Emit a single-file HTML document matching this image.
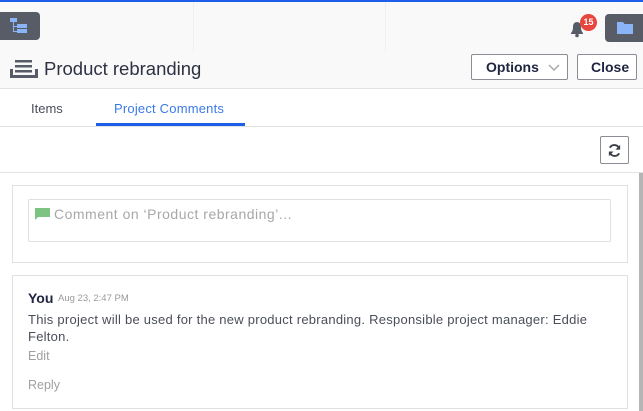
<!DOCTYPE html>
<html><head><style>
*{margin:0;padding:0;box-sizing:border-box}
body{width:643px;height:411px;overflow:hidden;background:#fff;font-family:"Liberation Sans",sans-serif;position:relative;color:#2d3142}
.abs{position:absolute;white-space:nowrap}
</style></head><body>
<div class="abs" style="left:0;top:0;width:643px;height:2px;background:#1f5ee8"></div>
<div class="abs" style="left:0;top:2px;width:643px;height:86px;background:#f9f9f9"></div>
<div class="abs" style="left:193px;top:2px;width:1px;height:50px;background:#f0f0f0"></div>
<div class="abs" style="left:385px;top:2px;width:1px;height:50px;background:#f0f0f0"></div>
<div class="abs" style="left:0;top:12px;width:40px;height:28px;background:#575c66;border-radius:0 4px 4px 0"></div>
<svg class="abs" style="left:8px;top:16px" width="22" height="20" viewBox="0 0 22 20"><rect x="2" y="2" width="7" height="4" fill="#8ab4f8"/><rect x="5" y="6" width="1" height="10" fill="#8ab4f8"/><rect x="5" y="10" width="4" height="1" fill="#8ab4f8"/><rect x="5" y="15" width="4" height="1" fill="#8ab4f8"/><rect x="9" y="8" width="10" height="4" fill="#8ab4f8"/><rect x="9" y="13" width="10" height="4" fill="#8ab4f8"/></svg>
<svg class="abs" style="left:567px;top:18px" width="20" height="20" viewBox="0 0 20 20"><path d="M4 16 L4 15 Q6 13 6 9 Q6 4 10 4 Q14 4 14 9 Q14 13 16 15 L16 16 Z" fill="#575c66"/><circle cx="10" cy="17.5" r="1.8" fill="#575c66"/></svg>
<div class="abs" style="left:580px;top:14px;width:17px;height:17px;border-radius:50%;background:#e8453c;color:#fff;font-size:9px;font-weight:bold;text-align:center;line-height:17px">15</div>
<div class="abs" style="left:605px;top:14px;width:38px;height:28px;background:#575c66;border-radius:4px 0 0 4px"></div>
<svg class="abs" style="left:616px;top:21px" width="18" height="14" viewBox="0 0 18 14"><path d="M1 1 H7 L8.5 3 H17 V13 H1 Z" fill="#8ab4f8"/></svg>
<svg class="abs" style="left:10px;top:59px" width="28" height="20" viewBox="0 0 28 20"><rect x="5" y="1" width="17" height="2.5" fill="#575c66"/><rect x="5" y="6" width="17" height="2.5" fill="#575c66"/><rect x="5" y="11" width="17" height="2.5" fill="#575c66"/><path d="M0 10 H3 V16 H25 V10 H28 V19 H0 Z" fill="#575c66"/></svg>
<div class="abs" style="left:44px;top:58px;font-size:18.5px;color:#2d3142">Product rebranding</div>
<div class="abs" style="left:471px;top:54px;width:97px;height:26px;border:1px solid #8a8d94;border-radius:2px;background:#fff"></div>
<div class="abs" style="left:486px;top:59px;font-size:14px;font-weight:bold;color:#1f2440">Options</div>
<svg class="abs" style="left:548px;top:64px" width="12" height="8" viewBox="0 0 12 8"><path d="M1 1 L6 6 L11 1" stroke="#aaa" stroke-width="1.5" fill="none"/></svg>
<div class="abs" style="left:577px;top:54px;width:60px;height:26px;border:1px solid #8a8d94;border-radius:2px;background:#fff"></div>
<div class="abs" style="left:591px;top:59px;font-size:14px;font-weight:bold;color:#1f2440">Close</div>
<div class="abs" style="left:0;top:88px;width:643px;height:1px;background:#e2e2e2"></div>
<div class="abs" style="left:31px;top:101px;font-size:13px;color:#4a4e5a">Items</div>
<div class="abs" style="left:114px;top:101px;font-size:13px;color:#3a7ae8;letter-spacing:0.2px">Project Comments</div>
<div class="abs" style="left:96px;top:123px;width:149px;height:3px;background:#1f5ee8"></div>
<div class="abs" style="left:0;top:126px;width:643px;height:1px;background:#e2e2e2"></div>
<div class="abs" style="left:600px;top:136px;width:29px;height:28px;border:1px solid #8a8d94;border-radius:2px;background:#fff"></div>
<svg class="abs" style="left:607px;top:143px" width="15" height="15" viewBox="0 0 16 16"><path d="M13 6 A5.5 5.5 0 0 0 3 5" stroke="#3a3d45" stroke-width="2" fill="none"/><path d="M14 2 V7 H9 Z" fill="#3a3d45"/><path d="M3 10 A5.5 5.5 0 0 0 13 11" stroke="#3a3d45" stroke-width="2" fill="none"/><path d="M2 14 V9 H7 Z" fill="#3a3d45"/></svg>
<div class="abs" style="left:0;top:172px;width:643px;height:1px;background:#e2e2e2"></div>
<div class="abs" style="left:639px;top:173px;width:4px;height:238px;background:#b5b5b5"></div>
<div class="abs" style="left:12px;top:185px;width:616px;height:78px;border:1px solid #e0e0e0"></div>
<div class="abs" style="left:28px;top:199px;width:583px;height:43px;border:1px solid #e0e0e0;border-radius:2px"></div>
<svg class="abs" style="left:35px;top:208px" width="15" height="13" viewBox="0 0 15 13"><path d="M0 0 H15 V9 H3 L0 12 Z" fill="#7cc47f"/></svg>
<div class="abs" style="left:54px;top:206px;font-size:14px;letter-spacing:0.5px;color:#a8a8a8">Comment on ‘Product rebranding’...</div>
<div class="abs" style="left:12px;top:275px;width:616px;height:134px;border:1px solid #e0e0e0"></div>
<div class="abs" style="left:28px;top:290px;font-size:14px;font-weight:bold;color:#1f2440">You</div>
<div class="abs" style="left:58px;top:293px;font-size:9.5px;color:#9a9a9a">Aug 23, 2:47 PM</div>
<div class="abs" style="left:28px;top:311px;font-size:13px;line-height:17px;color:#4a4e5a;letter-spacing:0.25px;white-space:normal;width:575px">This project will be used for the new product rebranding. Responsible project manager: Eddie Felton.</div>
<div class="abs" style="left:28px;top:349px;font-size:12.5px;color:#a0a0a0">Edit</div>
<div class="abs" style="left:28px;top:378px;font-size:12.5px;color:#a0a0a0">Reply</div>
</body></html>
